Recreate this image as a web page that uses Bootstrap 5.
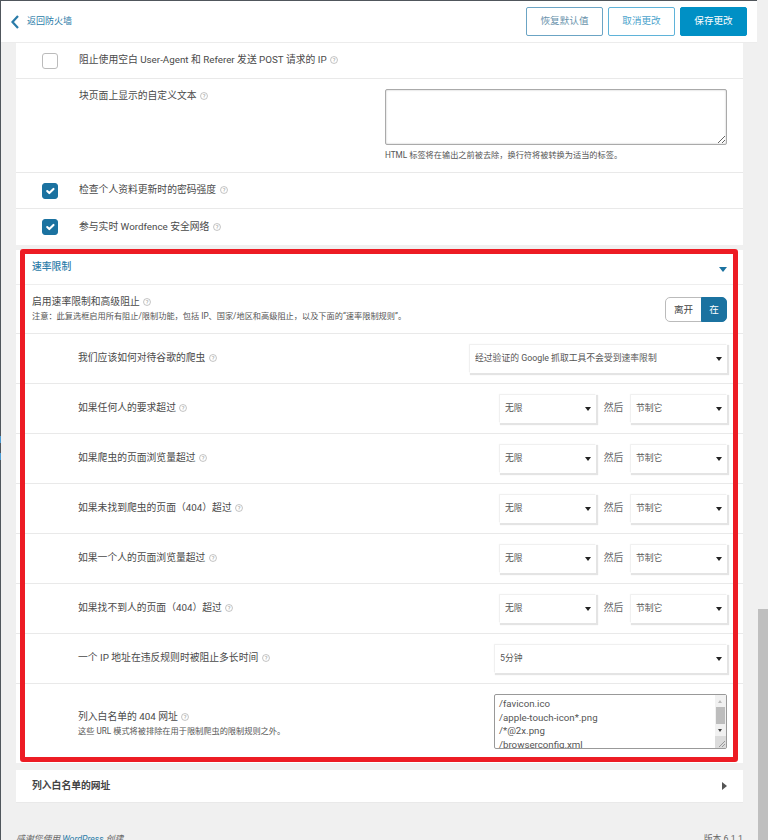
<!DOCTYPE html>
<html lang="zh">
<head>
<meta charset="utf-8"/>
<meta content="width=device-width, initial-scale=1.0" name="viewport"/>
<title>Wordfence</title>
<link href="https://cdn.jsdelivr.net/npm/bootstrap@5.3.2/dist/css/bootstrap.min.css" rel="stylesheet"/>
<style>
  html, body { height: 840px; overflow: hidden; }
  body {
    background: #f0f0f0;
    color: #4a4a4a;
    font-family: Roboto, "Noto Sans CJK SC", sans-serif;
    font-size: 9.8px;
    line-height: 1.3;
  }
  .pg-shell { position: relative; height: 840px; width: 757px; border-left: 1px solid #50565c; border-top: 1px solid #50565c; }
  .edge-tick { position: absolute; left: -1px; width: 1px; height: 7px; background: #4a9bd4; }
  .edge-tick-a { top: 435px; }
  .edge-tick-b { top: 452px; }

  .top-bar { height: 42px; background: #fff; border-bottom: 1px solid #ececec; padding: 0 10px 0 10px; }
  .back-link { color: #2a7ba8; font-size: 9px; text-decoration: none; column-gap: 8px; }
  .btn-row { column-gap: 5px; }
  .btn-wf { height: 29px; font-size: 9.6px; padding: 0; border-radius: 2px; border: 1px solid #6ba4c4; color: #6a93ac; background: #fff; }
  .btn-restore { width: 77px; }
  .btn-cancel { width: 67px; border-color: #5fb3d9; color: #4ba3cc; }
  .btn-save { width: 67px; background: #0090c5; border-color: #0090c5; color: #fff; }

  .sheet { width: 727px; margin-left: 15px; background: #fff; }
  .set-row { border-bottom: 1px solid #e9e9e9; display: flex; align-items: center; }
  .row-plain { height: 36px; }
  .row-last { border-bottom: 0; }
  .chk-box.form-check-input { width: 16px; height: 16px; border-radius: 3px; border: 1px solid #bbb; margin: 0 21px 0 26px; flex: none; box-shadow: none; }
  .chk-box.form-check-input:checked { background-color: #1b72a0; border-color: #1b72a0; }
  .row-txt { height: 94px; align-items: flex-start; }
  .lbl-txt { padding: 11px 0 0 63px; width: 369px; }
  .ta-box.form-control { width: 342px; height: 56px; min-height: 0; border: 1px solid #aaa; box-shadow: inset 0 0 2px #bbb; border-radius: 2px; margin-top: 10px; padding: 2px; resize: both; }
  .hint-line { font-size: 8.2px; margin-top: 5px; color: #555; }
  .q-mark { display: inline-block; width: 8px; height: 8px; vertical-align: -1px; margin-left: 3.5px; }

  .gap-band { height: 5px; }
  .rate-block { position: relative; }
  .red-frame { position: absolute; left: 4px; top: -1px; width: 718px; height: 513px; border: 5px solid #ed1c24; border-radius: 3px; pointer-events: none; }
  .rate-head { height: 35px; padding: 0 16px; border-bottom: 1px solid #eee; }
  .rate-title { color: #2a7ba8; font-weight: 500; margin-top: 1px; }
  .caret-down { width: 0; height: 0; border-left: 4px solid transparent; border-right: 4px solid transparent; border-top: 5px solid #1b72a0; margin-top: 4px; }
  .enable-row { height: 49px; padding: 0 16px; justify-content: space-between; }
  .note-line { font-size: 8.2px; color: #555; margin-top: 2px; }
  .seg-wrap { width: 62px; height: 25px; }
  .seg-wrap .btn { font-size: 9.6px; padding: 0; line-height: 23px; border-radius: 5px; }
  .seg-off { width: 37px; flex: none !important; background: #fff; border: 1px solid #bbb; color: #444; }
  .seg-on { background: #1b72a0; border: 1px solid #1b72a0; color: #fff; }

  .limit-row { height: 50px; padding: 0 16px 0 62px; justify-content: space-between; }
  .pair-wrap { display: flex; align-items: center; }
  .sel-wf.form-select {
    height: 28px; border: 0; border-radius: 0; padding: 0 16px 0 5px;
    font-size: 8.8px; color: #555; font-family: inherit; background-color: #fff;
    background-image: url("data:image/svg+xml,%3csvg xmlns='http://www.w3.org/2000/svg' viewBox='0 0 6 4'%3e%3cpath d='M0 0h6L3 4z' fill='%23222'/%3e%3c/svg%3e");
    background-size: 6px 4px; background-position: right 5px center;
    box-shadow: 1px 1px 1px 1px #e4e4e4, -1px -1px 1px 0 #f2f2f2;
  }
  .sel-wide { width: 257px; }
  .sel-mid { width: 232px; }
  .sel-small { width: 96px; }
  .then-txt { width: 35px; text-align: center; color: #666; }

  .list-row { height: 79px; padding: 0 16px 0 62px; justify-content: space-between; }
  .url-wrap { position: relative; width: 233px; height: 55px; align-self: flex-start; margin-top: 10px; }
  .url-box.form-control { width: 233px; height: 55px; min-height: 0; border: 1px solid #999; border-radius: 2px; overflow: hidden; resize: none; padding: 2px 4px; font-size: 9.7px; line-height: 13.7px; color: #555; box-shadow: none; }
  .sb-strip { position: absolute; right: 1px; top: 1px; bottom: 1px; width: 11px; background: #f1f1f1; }
  .sb-thumb { position: absolute; left: 1px; top: 12px; width: 9px; height: 17px; background: #bdbdbd; }
  .sb-up { position: absolute; left: 3px; top: 5px; width: 0; height: 0; border-left: 2.5px solid transparent; border-right: 2.5px solid transparent; border-bottom: 3px solid #bbb; }
  .sb-down { position: absolute; left: 3px; top: 34px; width: 0; height: 0; border-left: 2.5px solid transparent; border-right: 2.5px solid transparent; border-top: 3px solid #444; }
  .sb-corner { position: absolute; left: 0; bottom: 0; width: 11px; height: 12px; background: #dcdcdc; }
  .sb-grip { position: absolute; right: 0; bottom: 0; }

  .white-head { height: 33px; margin-top: 7px; padding: 0 16px; border-bottom: 1px solid #e9e9e9; }
  .white-title { font-weight: 700; color: #444; }
  .caret-right { width: 0; height: 0; border-top: 4px solid transparent; border-bottom: 4px solid transparent; border-left: 5px solid #555; }

  .foot-line { width: 727px; margin-left: 15px; margin-top: 31px; font-size: 8.8px; color: #666; }
  .foot-thanks { font-style: italic; }
  .foot-thanks a { color: #2a7ba8; text-decoration: none; }

  .page-sb { position: fixed; right: 0; top: 0; width: 10px; height: 840px; }
  .page-sb-thumb { position: absolute; top: 609px; left: 0; width: 10px; height: 231px; background: #bfbfbf; }
</style>
</head>
<body>
<svg width="0" height="0" class="position-absolute">
  <symbol id="help" viewBox="0 0 9 9"><circle cx="4.5" cy="4.5" r="3.9" fill="none" stroke="#aaa" stroke-width=".8"/><text x="4.5" y="6.8" text-anchor="middle" font-size="6.5" font-family="Roboto" fill="#999">?</text></symbol>
</svg>
<div class="pg-shell">
  <span class="edge-tick edge-tick-a"></span>
  <span class="edge-tick edge-tick-b"></span>

  <div class="top-bar d-flex align-items-center justify-content-between">
    <a class="back-link d-flex align-items-center" href="#">
      <svg width="8" height="14" viewBox="0 0 8 14"><path d="M7 1 L1.5 7 L7 13" fill="none" stroke="#2a7ba8" stroke-width="2.2"/></svg>
      <span>返回防火墙</span>
    </a>
    <div class="d-flex btn-row">
      <button class="btn btn-wf btn-restore">恢复默认值</button>
      <button class="btn btn-wf btn-cancel">取消更改</button>
      <button class="btn btn-wf btn-save">保存更改</button>
    </div>
  </div>

  <div class="sheet">
    <div class="set-row row-plain"><input class="form-check-input chk-box" type="checkbox"/><span>阻止使用空白 User-Agent 和 Referer 发送 POST 请求的 IP<svg class="q-mark"><use href="#help"/></svg></span></div>
    <div class="set-row row-txt">
      <div class="lbl-txt">块页面上显示的自定义文本<svg class="q-mark"><use href="#help"/></svg></div>
      <div><textarea class="form-control ta-box"></textarea><div class="hint-line">HTML 标签将在输出之前被去除，换行符将被转换为适当的标签。</div></div>
    </div>
    <div class="set-row row-plain"><input class="form-check-input chk-box" type="checkbox" checked/><span>检查个人资料更新时的密码强度<svg class="q-mark"><use href="#help"/></svg></span></div>
    <div class="set-row row-plain row-last"><input class="form-check-input chk-box" type="checkbox" checked/><span>参与实时 Wordfence 安全网络<svg class="q-mark"><use href="#help"/></svg></span></div>
  </div>
  <div class="gap-band"></div>

  <div class="sheet rate-block">
    <div class="rate-head d-flex align-items-center justify-content-between"><span class="rate-title">速率限制</span><span class="caret-down"></span></div>
    <div class="set-row enable-row">
      <div>
        <div>启用速率限制和高级阻止<svg class="q-mark"><use href="#help"/></svg></div>
        <div class="note-line">注意：此复选框启用所有阻止/限制功能，包括 IP、国家/地区和高级阻止，以及下面的“速率限制规则”。</div>
      </div>
      <div class="btn-group seg-wrap"><button class="btn seg-off">离开</button><button class="btn seg-on">在</button></div>
    </div>
    <div class="set-row limit-row">
      <span>我们应该如何对待谷歌的爬虫<svg class="q-mark"><use href="#help"/></svg></span>
      <select class="form-select sel-wf sel-wide"><option>经过验证的 Google 抓取工具不会受到速率限制</option></select>
    </div>
    <div class="set-row limit-row">
      <span>如果任何人的要求超过<svg class="q-mark"><use href="#help"/></svg></span>
      <div class="pair-wrap"><select class="form-select sel-wf sel-small"><option>无限</option></select><span class="then-txt">然后</span><select class="form-select sel-wf sel-small"><option>节制它</option></select></div>
    </div>
    <div class="set-row limit-row">
      <span>如果爬虫的页面浏览量超过<svg class="q-mark"><use href="#help"/></svg></span>
      <div class="pair-wrap"><select class="form-select sel-wf sel-small"><option>无限</option></select><span class="then-txt">然后</span><select class="form-select sel-wf sel-small"><option>节制它</option></select></div>
    </div>
    <div class="set-row limit-row">
      <span>如果未找到爬虫的页面（404）超过<svg class="q-mark"><use href="#help"/></svg></span>
      <div class="pair-wrap"><select class="form-select sel-wf sel-small"><option>无限</option></select><span class="then-txt">然后</span><select class="form-select sel-wf sel-small"><option>节制它</option></select></div>
    </div>
    <div class="set-row limit-row">
      <span>如果一个人的页面浏览量超过<svg class="q-mark"><use href="#help"/></svg></span>
      <div class="pair-wrap"><select class="form-select sel-wf sel-small"><option>无限</option></select><span class="then-txt">然后</span><select class="form-select sel-wf sel-small"><option>节制它</option></select></div>
    </div>
    <div class="set-row limit-row">
      <span>如果找不到人的页面（404）超过<svg class="q-mark"><use href="#help"/></svg></span>
      <div class="pair-wrap"><select class="form-select sel-wf sel-small"><option>无限</option></select><span class="then-txt">然后</span><select class="form-select sel-wf sel-small"><option>节制它</option></select></div>
    </div>
    <div class="set-row limit-row">
      <span>一个 IP 地址在违反规则时被阻止多长时间<svg class="q-mark"><use href="#help"/></svg></span>
      <select class="form-select sel-wf sel-mid"><option>5分钟</option></select>
    </div>
    <div class="set-row list-row row-last">
      <div>
        <div>列入白名单的 404 网址<svg class="q-mark"><use href="#help"/></svg></div>
        <div class="note-line">这些 URL 模式将被排除在用于限制爬虫的限制规则之外。</div>
      </div>
      <div class="url-wrap">
        <textarea class="form-control url-box">/favicon.ico
/apple-touch-icon*.png
/*@2x.png
/browserconfig.xml</textarea>
        <div class="sb-strip">
          <span class="sb-up"></span><span class="sb-thumb"></span><span class="sb-down"></span>
          <span class="sb-corner"><svg class="sb-grip" width="8" height="8" viewBox="0 0 8 8"><path d="M1 7 L7 1 M4 7 L7 4" stroke="#888" stroke-width=".8"/></svg></span>
        </div>
      </div>
    </div>
    <div class="red-frame"></div>
  </div>

  <div class="sheet white-head d-flex align-items-center justify-content-between"><span class="white-title">列入白名单的网址</span><span class="caret-right"></span></div>

  <div class="foot-line d-flex justify-content-between">
    <span class="foot-thanks">感谢您使用 <a href="#">WordPress</a> 创建</span>
    <span>版本 6.1.1</span>
  </div>
</div>
<div class="page-sb"><div class="page-sb-thumb"></div></div>
</body>
</html>
